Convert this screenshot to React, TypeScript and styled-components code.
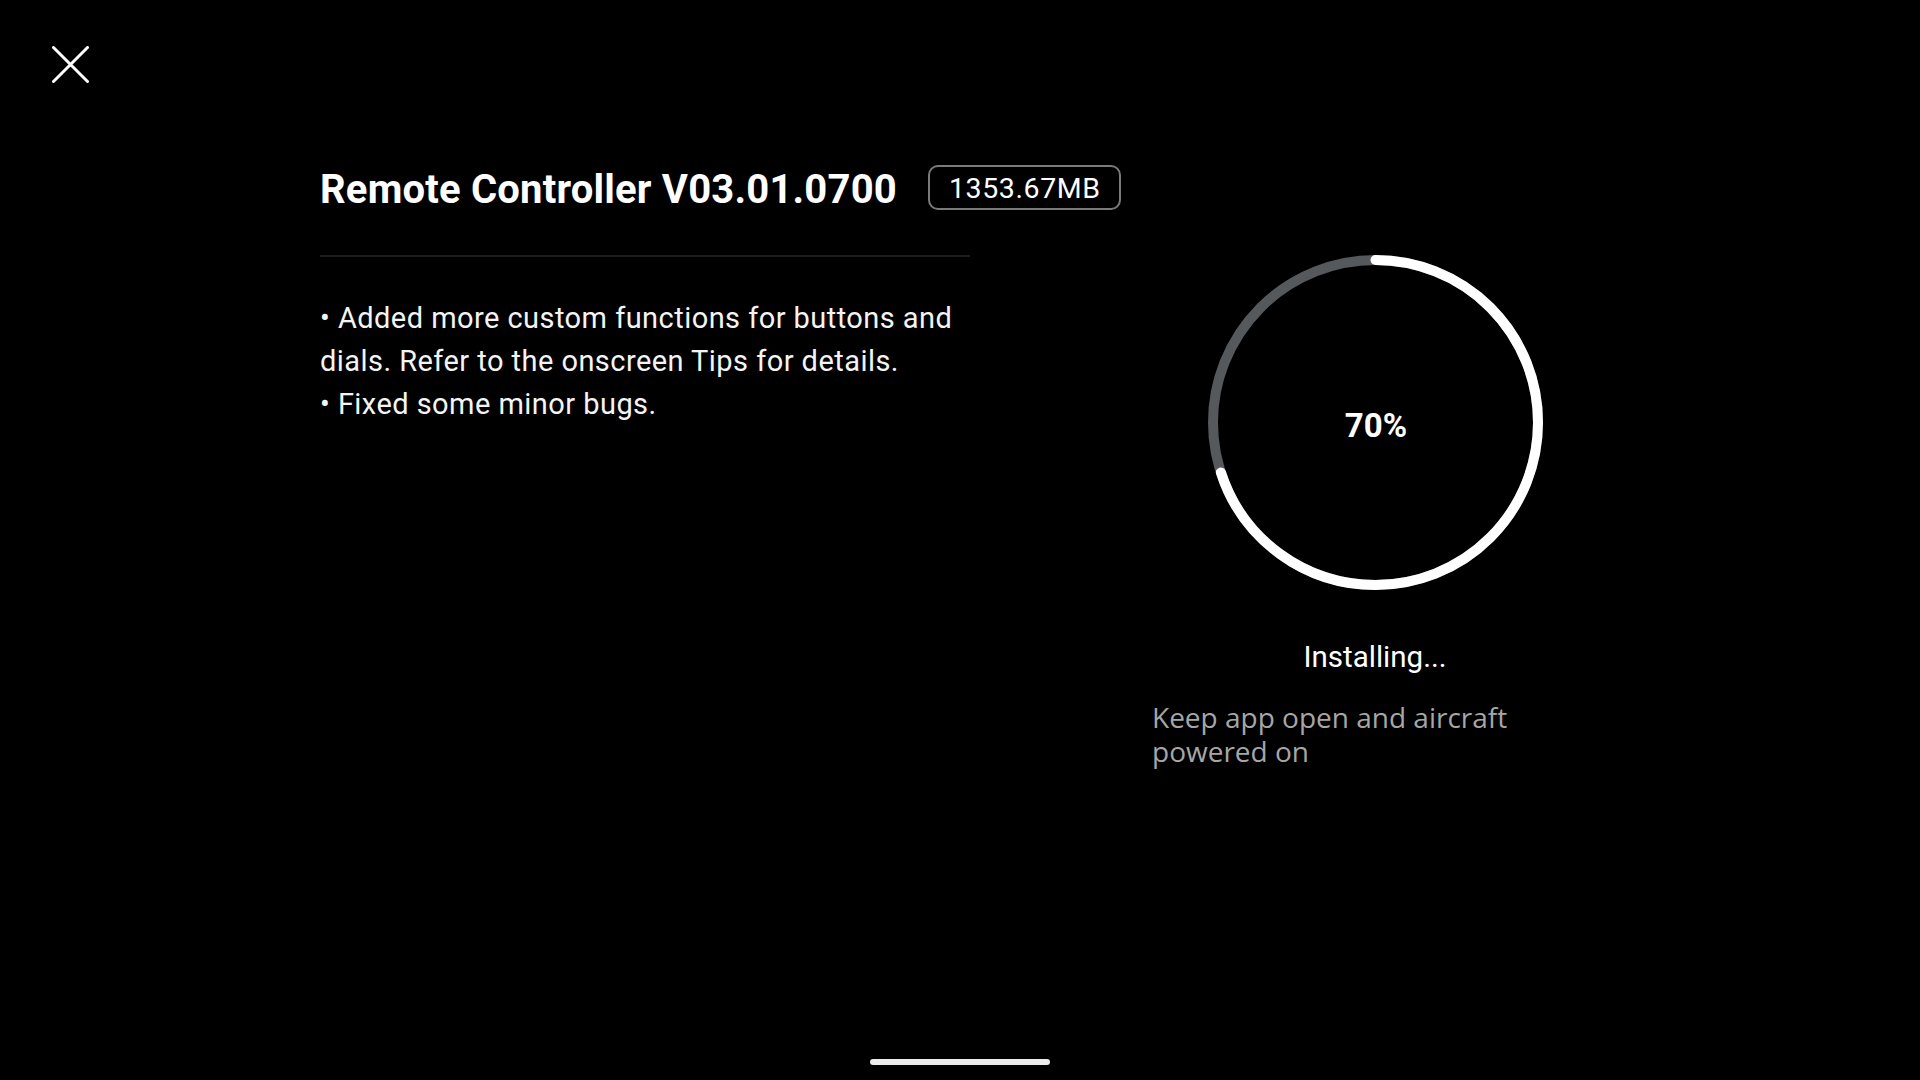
import { createGlobalStyle, styled } from "styled-components";

const GlobalStyle = createGlobalStyle`
    * {
        box-sizing: border-box;
    }

    html,
    body {
        margin: 0;
        padding: 0;
        background: #000;
    }

    body {
        font-family: Roboto, "Liberation Sans", sans-serif;
        color: #fff;
    }
`;

const PROGRESS = 0.7;
const RING_SIZE = 335;
const RING_STROKE = 10;

const notes = [
    "Added more custom functions for buttons and dials. Refer to the onscreen Tips for details.",
    "Fixed some minor bugs.",
];

const ProgressRing = ({ value }: { value: number }) => {
    const radius = (RING_SIZE - RING_STROKE) / 2;
    const circumference = 2 * Math.PI * radius;
    const center = RING_SIZE / 2;

    return (
        <RingWrap>
            <svg
                width={RING_SIZE}
                height={RING_SIZE}
                viewBox={`0 0 ${RING_SIZE} ${RING_SIZE}`}
            >
                <circle
                    cx={center}
                    cy={center}
                    r={radius}
                    fill="none"
                    stroke="#56595c"
                    strokeWidth={RING_STROKE}
                />
                <circle
                    cx={center}
                    cy={center}
                    r={radius}
                    fill="none"
                    stroke="#fff"
                    strokeWidth={RING_STROKE}
                    strokeLinecap="round"
                    strokeDasharray={`${circumference * value} ${circumference}`}
                    transform={`rotate(-90 ${center} ${center})`}
                />
            </svg>
            <Percent>{Math.round(value * 100)}%</Percent>
        </RingWrap>
    );
};

const App = () => {
    return (
        <Page>
            <GlobalStyle />
            <CloseButton aria-label="Close">
                <svg width="37" height="37" viewBox="0 0 37 37">
                    <path
                        d="M1.5 1.5 L35.5 35.5 M35.5 1.5 L1.5 35.5"
                        stroke="#fff"
                        strokeWidth="3"
                        strokeLinecap="round"
                    />
                </svg>
            </CloseButton>

            <Content>
                <LeftColumn>
                    <Header>
                        <Title>Remote Controller V03.01.0700</Title>
                        <SizeBadge>1353.67MB</SizeBadge>
                    </Header>
                    <Divider />
                    <Notes>
                        {notes.map((note) => (
                            <NoteLine key={note}>{`• ${note}`}</NoteLine>
                        ))}
                    </Notes>
                </LeftColumn>

                <RightColumn>
                    <ProgressRing value={PROGRESS} />
                    <Status>Installing...</Status>
                    <Hint>Keep app open and aircraft powered on</Hint>
                </RightColumn>
            </Content>

            <HomeIndicator />
        </Page>
    );
};

const Page = styled.div`
    height: 100vh;
    display: flex;
    flex-direction: column;
    background: #000;
    overflow: hidden;
`;

const CloseButton = styled.button`
    margin: 46px 0 0 52px;
    width: 37px;
    height: 37px;
    padding: 0;
    border: none;
    background: transparent;
    display: flex;
    cursor: pointer;
`;

const Content = styled.div`
    margin-top: 82px;
    padding-left: 320px;
    display: flex;
    gap: 182px;
`;

const LeftColumn = styled.div`
    width: 650px;
    display: flex;
    flex-direction: column;
`;

const Header = styled.div`
    height: 45px;
    display: flex;
    align-items: center;
    gap: 31px;
`;

const Title = styled.h1`
    margin: 4px 0 0;
    font-size: 40px;
    line-height: 1;
    font-weight: 700;
    letter-spacing: 0.2px;
    white-space: nowrap;
`;

const SizeBadge = styled.span`
    height: 45px;
    display: flex;
    align-items: center;
    padding: 1px 18px 0 19px;
    border: 2px solid #7a7a7a;
    border-radius: 10px;
    font-size: 28.5px;
    letter-spacing: 0.6px;
`;

const Divider = styled.div`
    margin-top: 45px;
    height: 2px;
    background: #1d1d1d;
`;

const Notes = styled.div`
    margin-top: 40px;
    font-size: 29px;
    line-height: 43px;
    letter-spacing: 0.45px;
    color: #f4f4f4;
`;

const NoteLine = styled.div``;

const RightColumn = styled.div`
    width: 446px;
    padding-top: 90px;
    display: flex;
    flex-direction: column;
    align-items: center;
`;

const RingWrap = styled.div`
    display: grid;
    place-items: center;

    & > * {
        grid-area: 1 / 1;
    }
`;

const Percent = styled.span`
    padding-top: 6px;
    padding-left: 2px;
    font-size: 33px;
    font-weight: 700;
`;

const Status = styled.div`
    margin-top: 50px;
    font-size: 29.5px;
    line-height: 35px;
    color: #fff;
`;

const Hint = styled.div`
    align-self: stretch;
    margin-top: 25px;
    font-family: "Open Sans", "Noto Sans", sans-serif;
    font-size: 28px;
    line-height: 34px;
    color: #a6a6a6;
`;

const HomeIndicator = styled.div`
    margin: auto auto 15px;
    width: 180px;
    height: 6px;
    border-radius: 3px;
    background: #ececec;
`;

export default App;
